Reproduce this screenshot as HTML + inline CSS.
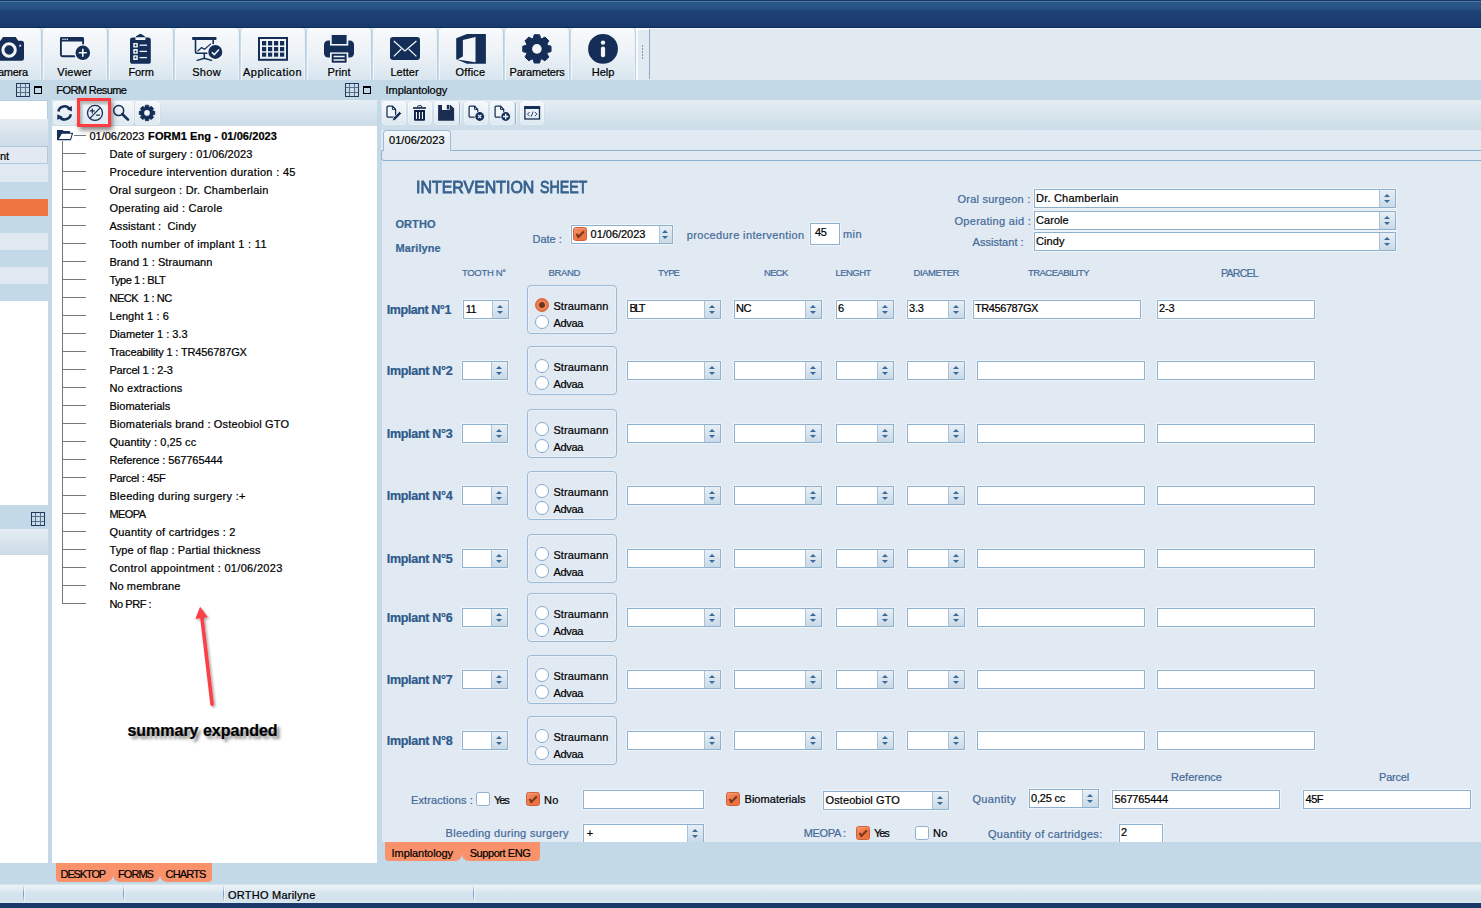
<!DOCTYPE html><html><head><meta charset="utf-8"><title>Implantology</title><style>
html,body{margin:0;padding:0;overflow:hidden}
body{width:1481px;height:908px;overflow:hidden;position:relative;background:#c3d9e7;font-family:"Liberation Sans",sans-serif;font-size:11px;color:#000}
div,svg{position:absolute;box-sizing:border-box}
.t{white-space:pre;-webkit-text-stroke:0.22px}
.titlebar{left:0;top:0;width:1481px;height:28px;background:linear-gradient(#1a3560 0,#1a3560 .6px,#4779a7 1.1px,#4779a7 1.9px,#2b5889 2.5px,#265081 9.3px,#1e4277 10.6px,#193a6b 26.4px,#0f2d5e 27.2px,#0f2d5e 28px)}
.toolbar{left:0;top:28px;width:1481px;height:52px;background:#e1e9f1}
.tbtn{top:0;width:66px;height:52px;background:linear-gradient(#f8fafc,#eef3f7 45%,#d8e5ee);border-left:1px solid #c6dae8;border-right:1px solid #b4cee2;border-radius:4px 4px 0 0;box-shadow:inset 1px 0 0 #f4f8fb,inset -1px 0 0 #edf3f8,inset 0 1px 0 #fbfcfd}
.band{background:linear-gradient(#e6edf3,#cbdce8)}
.sbtn{top:100.6px;height:24.6px;background:linear-gradient(#f6f9fb,#ebf1f6 45%,#dce8f0);border-radius:4px;box-shadow:0 0 0 .6px rgba(200,219,233,.9),inset 0 0 0 1px rgba(255,255,255,.3)}
.inp{background:#fff;border:1px solid #8fb1d0;box-shadow:0 0 0 1px rgba(255,255,255,.45)}
.spin{top:0;right:0;bottom:0;border-left:1px solid #a9c3da;background:linear-gradient(#e9eff5,#c9dae7)}
.spin:before,.spin:after{content:"";position:absolute;left:50%;margin-left:-3.7px;border-left:3.7px solid transparent;border-right:3.7px solid transparent}
.spin:before{top:50%;margin-top:-5px;border-bottom:3.6px solid #386a9c}
.spin:after{top:50%;margin-top:1.4px;border-top:3.6px solid #386a9c}
.grp{border:1px solid #9bbad5;border-radius:4px;box-shadow:inset 0 0 0 1px rgba(255,255,255,.35)}
.radio{width:14px;height:14px;border-radius:50%;background:#fff;border:1px solid #86aacb}
.radio.on{background:radial-gradient(circle,#6e3420 0,#6e3420 2.5px,#f08a5e 3.4px,#ea764b 5.2px,#dd6538 7px);border-color:#d9673d}
.cb{width:14px;height:14px;border-radius:2.5px;background:#fff;border:1px solid #8fb1d0}
.cb.on{background:linear-gradient(135deg,#f6906a,#ee7444 60%,#ed713f);border-color:#cf5f35;box-shadow:inset 0 1px 0 rgba(255,255,255,.18)}
.otab{background:#f9926b;border-radius:0 0 5px 5px}
</style></head><body><div class="titlebar"></div><div class="toolbar"><div class="tbtn" style="left:-24px"></div><div class="tbtn" style="left:42px"></div><div class="tbtn" style="left:108px"></div><div class="tbtn" style="left:174px"></div><div class="tbtn" style="left:240px"></div><div class="tbtn" style="left:306px"></div><div class="tbtn" style="left:372px"></div><div class="tbtn" style="left:438px"></div><div class="tbtn" style="left:504px"></div><div class="tbtn" style="left:570px"></div><div style="left:636px;top:0;width:13px;height:52px;background:#f8fafc"></div><div style="left:650px;top:0;width:831px;height:1px;background:#f0f4f8"></div><div style="left:638px;top:2px;width:11px;height:50px;background:#e1e9f1"></div><div style="left:649px;top:1px;width:1px;height:50px;background:#8dabc9"></div><div style="left:641.6px;top:16.6px;width:1.6px;height:14px;background:repeating-linear-gradient(#7f99b8 0 1.6px,transparent 1.6px 3.1px)"></div></div><div class="t " style="left:-9.70px;top:66.56px;font-size:11px;line-height:11px;color:#000;letter-spacing:-0.287px;">Camera</div><div class="t " style="left:57.30px;top:66.56px;font-size:11px;line-height:11px;color:#000;letter-spacing:0.213px;">Viewer</div><div class="t " style="left:128.50px;top:66.56px;font-size:11px;line-height:11px;color:#000;letter-spacing:-0.115px;">Form</div><div class="t " style="left:192.20px;top:66.56px;font-size:11px;line-height:11px;color:#000;letter-spacing:0.321px;">Show</div><div class="t " style="left:243.00px;top:66.56px;font-size:11px;line-height:11px;color:#000;letter-spacing:0.472px;">Application</div><div class="t " style="left:327.50px;top:66.56px;font-size:11px;line-height:11px;color:#000;letter-spacing:0.097px;">Print</div><div class="t " style="left:390.40px;top:66.56px;font-size:11px;line-height:11px;color:#000;letter-spacing:0.029px;">Letter</div><div class="t " style="left:455.60px;top:66.56px;font-size:11px;line-height:11px;color:#000;letter-spacing:0.212px;">Office</div><div class="t " style="left:509.50px;top:66.56px;font-size:11px;line-height:11px;color:#000;letter-spacing:-0.185px;">Parameters</div><div class="t " style="left:591.70px;top:66.56px;font-size:11px;line-height:11px;color:#000;letter-spacing:0.044px;">Help</div><svg style="left:0;top:0;z-index:5" width="660" height="130" viewBox="0 0 660 130"><path d="M-6 43.3 a2.5 2.5 0 0 1 2.5 -2.5 H0.5 L3 37 H15.7 L18.2 40.8 H21.5 a2.5 2.5 0 0 1 2.5 2.5 V58.3 a2.5 2.5 0 0 1 -2.5 2.5 H-3.5 a2.5 2.5 0 0 1 -2.5 -2.5 Z" fill="#142e57"/><circle cx="9.1" cy="50" r="6.2" fill="none" stroke="#f3f6f9" stroke-width="3"/><rect x="19.3" y="44.8" width="1.8" height="1.8" fill="#f3f6f9"/><path d="M83.1 46.5 V39.4 a1.5 1.5 0 0 0 -1.5 -1.5 H62.4 a1.5 1.5 0 0 0 -1.5 1.5 V54.8 a1.5 1.5 0 0 0 1.5 1.5 H75.5" fill="none" stroke="#142e57" stroke-width="1.9"/><rect x="60" y="37" width="24" height="4.6" rx="1.5" fill="#142e57"/><rect x="62.2" y="38.6" width="1.4" height="1.3" fill="#f3f6f9"/><rect x="64.4" y="38.6" width="1.4" height="1.3" fill="#f3f6f9"/><rect x="66.6" y="38.6" width="1.4" height="1.3" fill="#f3f6f9"/><circle cx="82.8" cy="52.8" r="8.6" fill="#f3f6f9"/><circle cx="82.8" cy="52.8" r="7.3" fill="#142e57"/><path d="M82.8 48.8 V56.8 M78.8 52.8 H86.8" stroke="#f3f6f9" stroke-width="1.6"/><rect x="130" y="37.4" width="20.8" height="26.4" rx="2.6" fill="#142e57"/><path d="M135.5 40 V38.2 a1.2 1.2 0 0 1 1.2 -1.2 H144.2 a1.2 1.2 0 0 1 1.2 1.2 V40 Z" fill="#f3f6f9"/><path d="M136 37.2 H144.9 V36.2 L141.6 34.2 a1.6 1.6 0 0 0 -2.2 0 L136 36.2 Z" fill="#142e57"/><rect x="133.2" y="42.900000000000006" width="4.6" height="4.6" rx=".6" fill="#f3f6f9"/><circle cx="135.5" cy="45.2" r="1" fill="#142e57"/><path d="M139.6 45.2 H147" stroke="#f3f6f9" stroke-width="1.3"/><rect x="133.2" y="49.1" width="4.6" height="4.6" rx=".6" fill="#f3f6f9"/><circle cx="135.5" cy="51.4" r="1" fill="#142e57"/><path d="M139.6 51.4 H147" stroke="#f3f6f9" stroke-width="1.3"/><rect x="133.2" y="55.300000000000004" width="4.6" height="4.6" rx=".6" fill="#f3f6f9"/><circle cx="135.5" cy="57.6" r="1" fill="#142e57"/><path d="M139.6 57.6 H147" stroke="#f3f6f9" stroke-width="1.3"/><rect x="192" y="37" width="24.6" height="3" rx="1.2" fill="#142e57"/><path d="M195.5 40 V52 a1.2 1.2 0 0 0 1.2 1.2 H212 a1.2 1.2 0 0 0 1.2 -1.2 V40" fill="none" stroke="#142e57" stroke-width="1.6"/><path d="M204.3 53.5 V58.4 M204.3 58.2 L197.2 60.4 M204.3 58.2 L211.5 60.4" fill="none" stroke="#142e57" stroke-width="1.5" stroke-linecap="round"/><path d="M197.5 51.3 L201.6 47.6 L204.6 49.2 L211 43.6" fill="none" stroke="#142e57" stroke-width="1.2"/><circle cx="215.3" cy="51.9" r="8.1" fill="#f3f6f9"/><circle cx="215.3" cy="51.9" r="7" fill="#142e57"/><path d="M211.9 52.2 L214.3 54.6 L219 49.6" fill="none" stroke="#f3f6f9" stroke-width="1.5"/><rect x="259" y="38" width="28" height="21.8" fill="none" stroke="#142e57" stroke-width="2"/><rect x="262" y="41" width="4.2" height="4.5" fill="#142e57"/><rect x="262" y="47" width="4.2" height="4.2" fill="#142e57"/><rect x="262" y="52.6" width="4.2" height="4.1" fill="#142e57"/><rect x="268" y="41" width="4.2" height="4.5" fill="#142e57"/><rect x="268" y="47" width="4.2" height="4.2" fill="#142e57"/><rect x="268" y="52.6" width="4.2" height="4.1" fill="#142e57"/><rect x="274" y="41" width="4.2" height="4.5" fill="#142e57"/><rect x="274" y="47" width="4.2" height="4.2" fill="#142e57"/><rect x="274" y="52.6" width="4.2" height="4.1" fill="#142e57"/><rect x="280" y="41" width="4.2" height="4.5" fill="#142e57"/><rect x="280" y="47" width="4.2" height="4.2" fill="#142e57"/><rect x="280" y="52.6" width="4.2" height="4.1" fill="#142e57"/><rect x="324" y="40.4" width="30" height="17.2" rx="4.2" fill="#142e57"/><rect x="330" y="33.6" width="18.3" height="12" fill="#f3f6f9"/><rect x="331.7" y="35" width="14.9" height="9" fill="#142e57"/><rect x="330" y="52.4" width="18.3" height="11.5" fill="#f3f6f9"/><rect x="331.7" y="53.8" width="14.9" height="8.9" fill="#142e57"/><path d="M333.6 56.5 H344.7 M333.6 60.1 H344.7" stroke="#f3f6f9" stroke-width="1.5"/><rect x="390" y="37" width="30" height="22.9" rx="3.2" fill="#142e57"/><path d="M393.8 41 L404.9 51 L416.4 41 M393.8 56.4 L401.3 49 M416.4 56.4 L408.7 49" fill="none" stroke="#f3f6f9" stroke-width="1.25"/><path d="M456.2 38.2 L467 34.1 H485.9 V63.8 H467 L456.2 59.3 Z" fill="#142e57"/><path d="M462.9 40 L475.5 37 V62.3 L457.4 59.5 L462.9 56.6 Z" fill="#f3f6f9"/><path d="M533.27 38.30 L534.18 34.76 L539.62 34.76 L540.53 38.30 L541.83 38.84 L544.98 36.98 L548.82 40.82 L546.96 43.97 L547.50 45.27 L551.04 46.18 L551.04 51.62 L547.50 52.53 L546.96 53.83 L548.82 56.98 L544.98 60.82 L541.83 58.96 L540.53 59.50 L539.62 63.04 L534.18 63.04 L533.27 59.50 L531.97 58.96 L528.82 60.82 L524.98 56.98 L526.84 53.83 L526.30 52.53 L522.76 51.62 L522.76 46.18 L526.30 45.27 L526.84 43.97 L524.98 40.82 L528.82 36.98 L531.97 38.84 Z" fill="#142e57" stroke="#142e57" stroke-width="1.0" stroke-linejoin="round"/><circle cx="536.9" cy="48.9" r="4.8" fill="#f3f6f9"/><circle cx="603" cy="48.9" r="14.9" fill="#142e57"/><circle cx="603" cy="42.6" r="2.2" fill="#f3f6f9"/><path d="M603 48.6 V55.2" stroke="#f3f6f9" stroke-width="4.2" stroke-linecap="round"/><path d="M58.39999999999999 111.5 A6.2 6.2 0 0 1 69.8 109.30000000000001" fill="none" stroke="#142e57" stroke-width="2.5"/><path d="M70.8 114.30000000000001 A6.2 6.2 0 0 1 59.39999999999999 116.5" fill="none" stroke="#142e57" stroke-width="2.5"/><path d="M71.9 105.9 V111.6 L66.6 109.1 Z" fill="#142e57"/><path d="M57.3 119.9 V114.2 L62.6 116.7 Z" fill="#142e57"/><circle cx="95" cy="112.9" r="7.5" fill="none" stroke="#142e57" stroke-width="1.3"/><path d="M89.9 118.4 L100.3 107.6" stroke="#142e57" stroke-width="1.3"/><path d="M92.3 108.4 V113.4 M89.8 110.9 H94.8 M96.2 115.2 H99.9" stroke="#142e57" stroke-width="1.2"/><circle cx="118.7" cy="110.6" r="5" fill="none" stroke="#142e57" stroke-width="1.5"/><path d="M122.4 114.2 L128 119.6" stroke="#142e57" stroke-width="2.6" stroke-linecap="round"/><path d="M144.97 107.15 L145.43 105.16 L148.57 105.16 L149.03 107.15 L149.63 107.40 L151.36 106.32 L153.58 108.54 L152.50 110.27 L152.75 110.87 L154.74 111.33 L154.74 114.47 L152.75 114.93 L152.50 115.53 L153.58 117.26 L151.36 119.48 L149.63 118.40 L149.03 118.65 L148.57 120.64 L145.43 120.64 L144.97 118.65 L144.37 118.40 L142.64 119.48 L140.42 117.26 L141.50 115.53 L141.25 114.93 L139.26 114.47 L139.26 111.33 L141.25 110.87 L141.50 110.27 L140.42 108.54 L142.64 106.32 L144.37 107.40 Z" fill="#142e57" stroke="#142e57" stroke-width="0.8" stroke-linejoin="round"/><circle cx="147" cy="112.9" r="2.8" fill="#f3f6f9"/><path d="M387.0 107.0 a1 1 0 0 1 1 -1 H392.40000000000003 L395.6 109.4 V116.2 a1 1 0 0 1 -1 1 H388.0 a1 1 0 0 1 -1 -1 Z" fill="#f3f6f9" stroke="#142e57" stroke-width="1.25" stroke-linejoin="round"/><path d="M392.40000000000003 106.1 V109.4 H395.6" fill="none" stroke="#142e57" stroke-width="1"/><path d="M392.4 121 L393.1 117.9 L399.5 111.4 L401.6 113.5 L395.3 120.1 Z" fill="#142e57" stroke="#dfe8f0" stroke-width=".8"/><path d="M413 108 H426" stroke="#0f2149" stroke-width="1.6"/><path d="M417.7 107.4 V106.3 a.6 .6 0 0 1 .6 -.6 H421 a.6 .6 0 0 1 .6 .6 V107.4" fill="none" stroke="#0f2149" stroke-width="1"/><path d="M414 110 H425 V119.8 a1 1 0 0 1 -1 1 H415 a1 1 0 0 1 -1 -1 Z" fill="#0f2149"/><path d="M416.45 112 V118.9 M419.45 112 V118.9 M422.45 112 V118.9" stroke="#f3f6f9" stroke-width="1.1"/><path d="M438.1 105 H450.6 L454.1 108.5 V120.8 H438.1 Z" fill="#1b2d52"/><rect x="442" y="104.9" width="7.6" height="5.1" fill="#f3f6f9"/><rect x="446.8" y="104.9" width="2.2" height="4.5" fill="#1b2d52"/><path d="M469.09999999999997 107.0 a1 1 0 0 1 1 -1 H474.5 L477.7 109.4 V116.2 a1 1 0 0 1 -1 1 H470.09999999999997 a1 1 0 0 1 -1 -1 Z" fill="#f3f6f9" stroke="#142e57" stroke-width="1.25" stroke-linejoin="round"/><path d="M474.5 106.1 V109.4 H477.7" fill="none" stroke="#142e57" stroke-width="1"/><circle cx="479.7" cy="116.5" r="5.2" fill="#e0e9f1"/><circle cx="479.7" cy="116.5" r="4.4" fill="#142e57"/><path d="M478.1 114.9 L481.3 118.1 M481.3 114.9 L478.1 118.1" stroke="#f3f6f9" stroke-width="1.3"/><path d="M495.09999999999997 107.0 a1 1 0 0 1 1 -1 H500.5 L503.7 109.4 V116.2 a1 1 0 0 1 -1 1 H496.09999999999997 a1 1 0 0 1 -1 -1 Z" fill="#f3f6f9" stroke="#142e57" stroke-width="1.25" stroke-linejoin="round"/><path d="M500.5 106.1 V109.4 H503.7" fill="none" stroke="#142e57" stroke-width="1"/><circle cx="505.7" cy="116.5" r="5.2" fill="#e0e9f1"/><circle cx="505.7" cy="116.5" r="4.4" fill="#142e57"/><path d="M505.7 113.8 V119.2 M503 116.5 H508.4" stroke="#f3f6f9" stroke-width="1.4"/><rect x="524.9" y="106.8" width="14.6" height="12.2" fill="none" stroke="#142e57" stroke-width="1.3"/><rect x="524.3" y="106.2" width="15.8" height="2.8" fill="#142e57"/><path d="M529.6 112 L527.5 114.1 L529.6 116.2 M534.8 112 L536.9 114.1 L534.8 116.2 M533.2 111.6 L531.2 116.6" fill="none" stroke="#142e57" stroke-width=".9"/></svg><div class="t " style="left:56.30px;top:85.26px;font-size:11px;line-height:11px;color:#000;letter-spacing:-0.581px;">FORM Resume</div><div class="t " style="left:385.60px;top:85.26px;font-size:11px;line-height:11px;color:#000;letter-spacing:-0.072px;">Implantology</div><svg style="left:16px;top:83px" width="14" height="14" viewBox="0 0 14 14"><rect x="0.5" y="0.5" width="13" height="13" fill="#c9dcea" stroke="#22385a"/><path d="M4.5 1V13M9.5 1V13M1 4.5H13M1 9.5H13" stroke="#5b6f88" stroke-width="1"/></svg><div style="left:34px;top:86px;width:8px;height:8px;border:1px solid #000;border-top-width:2px"></div><svg style="left:345px;top:83px" width="14" height="14" viewBox="0 0 14 14"><rect x="0.5" y="0.5" width="13" height="13" fill="#c9dcea" stroke="#22385a"/><path d="M4.5 1V13M9.5 1V13M1 4.5H13M1 9.5H13" stroke="#5b6f88" stroke-width="1"/></svg><div style="left:363px;top:86px;width:8px;height:8px;border:1px solid #000;border-top-width:2px"></div><div class="band" style="left:0;top:100px;width:48px;height:26px"></div><div style="left:-1px;top:100px;width:49px;height:20px;background:#fff;border:1px solid #b5cde0"></div><div style="left:-1px;top:146px;width:49px;height:18px;background:#e2e9f2;border:1px solid #b2c9dd"></div><div class="t " style="left:0.00px;top:150.86px;font-size:11px;line-height:11px;color:#000;">nt</div><div class="band" style="left:0;top:119px;width:48px;height:27px"></div><div style="left:0;top:164px;width:48px;height:18px;background:#e0e8f1"></div><div style="left:0;top:199px;width:48px;height:17px;background:#ee7641"></div><div style="left:0;top:233px;width:48px;height:17px;background:#e0e8f1"></div><div style="left:0;top:267px;width:48px;height:17px;background:#e0e8f1"></div><div style="left:0;top:301px;width:48px;height:204px;background:#fff"></div><svg style="left:31px;top:512px" width="14" height="14" viewBox="0 0 14 14"><rect x="0.5" y="0.5" width="13" height="13" fill="#c9dcea" stroke="#22385a"/><path d="M4.5 1V13M9.5 1V13M1 4.5H13M1 9.5H13" stroke="#5b6f88" stroke-width="1"/></svg><div class="band" style="left:0;top:529px;width:48px;height:26px"></div><div style="left:0;top:555px;width:48px;height:308px;background:#fff"></div><div class="band" style="left:52px;top:100px;width:325px;height:26px"></div><div class="sbtn" style="left:52.6px;width:24.6px"></div><div class="sbtn" style="left:78px;width:32px"></div><div class="sbtn" style="left:111px;width:22.599999999999994px"></div><div class="sbtn" style="left:134.6px;width:25.0px"></div><div style="left:52px;top:126px;width:325px;height:737px;background:#fff"></div><div style="left:74px;top:135px;width:12px;height:1px;background:#787878"></div><div style="left:62px;top:141px;width:1px;height:463px;background:#787878"></div><div style="left:62px;top:153px;width:24px;height:1px;background:#787878"></div><div class="t " style="left:109.40px;top:148.86px;font-size:11px;line-height:11px;color:#000;letter-spacing:0.135px;">Date of surgery : 01/06/2023</div><div style="left:62px;top:171px;width:24px;height:1px;background:#787878"></div><div class="t " style="left:109.40px;top:166.86px;font-size:11px;line-height:11px;color:#000;letter-spacing:0.320px;">Procedure intervention duration : 45</div><div style="left:62px;top:189px;width:24px;height:1px;background:#787878"></div><div class="t " style="left:109.40px;top:184.86px;font-size:11px;line-height:11px;color:#000;letter-spacing:0.233px;">Oral surgeon : Dr. Chamberlain</div><div style="left:62px;top:207px;width:24px;height:1px;background:#787878"></div><div class="t " style="left:109.40px;top:202.86px;font-size:11px;line-height:11px;color:#000;letter-spacing:0.250px;">Operating aid : Carole</div><div style="left:62px;top:225px;width:24px;height:1px;background:#787878"></div><div class="t " style="left:109.40px;top:220.86px;font-size:11px;line-height:11px;color:#000;letter-spacing:0.101px;">Assistant :  Cindy</div><div style="left:62px;top:243px;width:24px;height:1px;background:#787878"></div><div class="t " style="left:109.40px;top:238.86px;font-size:11px;line-height:11px;color:#000;letter-spacing:0.325px;">Tooth number of implant 1 : 11</div><div style="left:62px;top:261px;width:24px;height:1px;background:#787878"></div><div class="t " style="left:109.40px;top:256.86px;font-size:11px;line-height:11px;color:#000;letter-spacing:0.084px;">Brand 1 : Straumann</div><div style="left:62px;top:279px;width:24px;height:1px;background:#787878"></div><div class="t " style="left:109.40px;top:274.86px;font-size:11px;line-height:11px;color:#000;letter-spacing:-0.479px;">Type 1 : BLT</div><div style="left:62px;top:297px;width:24px;height:1px;background:#787878"></div><div class="t " style="left:109.40px;top:292.86px;font-size:11px;line-height:11px;color:#000;letter-spacing:-0.454px;">NECK  1 : NC</div><div style="left:62px;top:315px;width:24px;height:1px;background:#787878"></div><div class="t " style="left:109.40px;top:310.86px;font-size:11px;line-height:11px;color:#000;letter-spacing:0.125px;">Lenght 1 : 6</div><div style="left:62px;top:333px;width:24px;height:1px;background:#787878"></div><div class="t " style="left:109.40px;top:328.86px;font-size:11px;line-height:11px;color:#000;letter-spacing:-0.003px;">Diameter 1 : 3.3</div><div style="left:62px;top:351px;width:24px;height:1px;background:#787878"></div><div class="t " style="left:109.40px;top:346.86px;font-size:11px;line-height:11px;color:#000;letter-spacing:-0.142px;">Traceability 1 : TR456787GX</div><div style="left:62px;top:369px;width:24px;height:1px;background:#787878"></div><div class="t " style="left:109.40px;top:364.86px;font-size:11px;line-height:11px;color:#000;letter-spacing:-0.151px;">Parcel 1 : 2-3</div><div style="left:62px;top:387px;width:24px;height:1px;background:#787878"></div><div class="t " style="left:109.40px;top:382.86px;font-size:11px;line-height:11px;color:#000;letter-spacing:0.193px;">No extractions</div><div style="left:62px;top:405px;width:24px;height:1px;background:#787878"></div><div class="t " style="left:109.40px;top:400.86px;font-size:11px;line-height:11px;color:#000;letter-spacing:0.040px;">Biomaterials</div><div style="left:62px;top:423px;width:24px;height:1px;background:#787878"></div><div class="t " style="left:109.40px;top:418.86px;font-size:11px;line-height:11px;color:#000;letter-spacing:0.170px;">Biomaterials brand : Osteobiol GTO</div><div style="left:62px;top:441px;width:24px;height:1px;background:#787878"></div><div class="t " style="left:109.40px;top:436.86px;font-size:11px;line-height:11px;color:#000;letter-spacing:0.067px;">Quantity : 0,25 cc</div><div style="left:62px;top:459px;width:24px;height:1px;background:#787878"></div><div class="t " style="left:109.40px;top:454.86px;font-size:11px;line-height:11px;color:#000;letter-spacing:-0.089px;">Reference : 567765444</div><div style="left:62px;top:477px;width:24px;height:1px;background:#787878"></div><div class="t " style="left:109.40px;top:472.86px;font-size:11px;line-height:11px;color:#000;letter-spacing:-0.267px;">Parcel : 45F</div><div style="left:62px;top:495px;width:24px;height:1px;background:#787878"></div><div class="t " style="left:109.40px;top:490.86px;font-size:11px;line-height:11px;color:#000;letter-spacing:0.292px;">Bleeding during surgery :+</div><div style="left:62px;top:513px;width:24px;height:1px;background:#787878"></div><div class="t " style="left:109.40px;top:508.86px;font-size:11px;line-height:11px;color:#000;letter-spacing:-0.563px;">MEOPA</div><div style="left:62px;top:531px;width:24px;height:1px;background:#787878"></div><div class="t " style="left:109.40px;top:526.86px;font-size:11px;line-height:11px;color:#000;letter-spacing:0.249px;">Quantity of cartridges : 2</div><div style="left:62px;top:549px;width:24px;height:1px;background:#787878"></div><div class="t " style="left:109.40px;top:544.86px;font-size:11px;line-height:11px;color:#000;letter-spacing:0.159px;">Type of flap : Partial thickness</div><div style="left:62px;top:567px;width:24px;height:1px;background:#787878"></div><div class="t " style="left:109.40px;top:562.86px;font-size:11px;line-height:11px;color:#000;letter-spacing:0.310px;">Control appointment : 01/06/2023</div><div style="left:62px;top:585px;width:24px;height:1px;background:#787878"></div><div class="t " style="left:109.40px;top:580.86px;font-size:11px;line-height:11px;color:#000;letter-spacing:0.119px;">No membrane</div><div style="left:62px;top:603px;width:24px;height:1px;background:#787878"></div><div class="t " style="left:109.40px;top:598.86px;font-size:11px;line-height:11px;color:#000;letter-spacing:-0.429px;">No PRF :</div><div class="t " style="left:89.40px;top:130.86px;font-size:11px;line-height:11px;color:#000;">01/06/2023 </div><div class="t " style="left:148.10px;top:130.86px;font-size:11px;line-height:11px;color:#000;font-weight:bold;letter-spacing:0.079px;">FORM1 Eng - 01/06/2023</div><svg style="left:56px;top:129px" width="18" height="13" viewBox="56 129 18 13"><path d="M57 130 H62.9 L63.5 131.1 H69.9 V133.2 H61.4 L57.6 140.2 H57 Z" fill="#142e57"/><path d="M61.5 133.3 H72.5 L70.6 139.6 H57.9 Z" fill="#fff" stroke="#142e57" stroke-width="1.1" stroke-linejoin="round"/></svg><div style="left:77px;top:98px;width:34px;height:29px;border:3px solid #fc3c3e;box-shadow:1.5px 3px 5px rgba(0,0,0,.5),inset 2px 3px 3px rgba(0,0,0,.28)"></div><div class="t " style="left:127.40px;top:722.51px;font-size:16px;line-height:16px;color:#000;font-weight:bold;letter-spacing:-0.005px;text-shadow:3px 3px 3px rgba(0,0,0,.5);">summary expanded</div><svg style="left:180px;top:595px" width="50" height="125" viewBox="180 595 50 125"><g filter="url(#sh)"><path d="M212.1 704.3 L201.9 617.5" stroke="#fb3f46" stroke-width="3.6" fill="none" stroke-linecap="round"/><path d="M200.1 606.8 L207.8 617.3 L195.3 619 Z" fill="#fb3f46"/></g><defs><filter id="sh" x="-50%" y="-10%" width="200%" height="120%"><feDropShadow dx="1.5" dy="1.5" stdDeviation="1.3" flood-opacity=".35"/></filter></defs></svg><div class="otab" style="left:56px;top:863px;width:57px;height:19px;border-radius:0 0 7px 4px"></div><div class="otab" style="left:113px;top:863px;width:47px;height:19px;border-radius:0 0 7px 7px"></div><div class="otab" style="left:160px;top:863px;width:52px;height:19px;border-radius:0 0 4px 7px"></div><div class="t " style="left:60.60px;top:868.86px;font-size:11px;line-height:11px;color:#000;letter-spacing:-1.138px;">DESKTOP</div><div class="t " style="left:118.00px;top:868.86px;font-size:11px;line-height:11px;color:#000;letter-spacing:-0.944px;">FORMS</div><div class="t " style="left:165.60px;top:868.86px;font-size:11px;line-height:11px;color:#000;letter-spacing:-0.838px;">CHARTS</div><div class="band" style="left:381px;top:100px;width:1100px;height:30px"></div><div class="sbtn" style="left:381.6px;width:24.799999999999955px"></div><div class="sbtn" style="left:407.8px;width:24.399999999999977px"></div><div class="sbtn" style="left:433.8px;width:24.80000000000001px"></div><div class="sbtn" style="left:463.6px;width:24.599999999999966px"></div><div class="sbtn" style="left:489.7px;width:24.599999999999966px"></div><div class="sbtn" style="left:519.5px;width:24.799999999999955px"></div><div style="left:459px;top:103px;width:1px;height:21px;background:#96b7d4"></div><div style="left:460px;top:103px;width:1px;height:21px;background:rgba(255,255,255,.5)"></div><div style="left:515px;top:103px;width:1px;height:21px;background:#96b7d4"></div><div style="left:516px;top:103px;width:1px;height:21px;background:rgba(255,255,255,.5)"></div><div style="left:381px;top:130px;width:1100px;height:712px;background:#e1e9f2"></div><div style="left:381px;top:150px;width:1101px;height:11px;border:1px solid #8fb1d0;border-right:0;border-radius:2px 0 0 3px;background:#e1e9f2"></div><div style="left:383px;top:130px;width:68px;height:21px;border:1px solid #9dbbd6;border-bottom:0;border-radius:4px 4px 0 0;background:linear-gradient(#f4f7fa,#e1e9f2)"></div><div style="left:381px;top:161px;width:1px;height:681px;background:#c3d9e7"></div><div class="t " style="left:389.00px;top:135.26px;font-size:11px;line-height:11px;color:#000;letter-spacing:0.055px;">01/06/2023</div><div class="t " style="left:416.20px;top:178.88px;font-size:17px;line-height:17px;color:#36628f;-webkit-text-stroke:0.85px #36628f;transform:scaleX(0.9374);transform-origin:0 0;">INTERVENTION</div><div class="t " style="left:539.90px;top:178.88px;font-size:17px;line-height:17px;color:#36628f;-webkit-text-stroke:0.85px #36628f;transform:scaleX(0.8336);transform-origin:0 0;">SHEET</div><div class="t " style="left:395.50px;top:218.86px;font-size:11px;line-height:11px;color:#3a6795;font-weight:bold;letter-spacing:0.056px;">ORTHO</div><div class="t " style="left:395.50px;top:242.86px;font-size:11px;line-height:11px;color:#3a6795;font-weight:bold;letter-spacing:0.072px;">Marilyne</div><div class="t " style="left:532.50px;top:233.56px;font-size:11px;line-height:11px;color:#456b99;letter-spacing:-0.024px;">Date :</div><div class="t " style="left:686.70px;top:230.36px;font-size:11px;line-height:11px;color:#456b99;letter-spacing:0.380px;">procedure intervention</div><div class="t " style="left:843.00px;top:228.86px;font-size:11px;line-height:11px;color:#456b99;letter-spacing:0.425px;">min</div><div class="t " style="left:957.50px;top:193.86px;font-size:11px;line-height:11px;color:#456b99;letter-spacing:0.236px;">Oral surgeon :</div><div class="t " style="left:954.50px;top:215.86px;font-size:11px;line-height:11px;color:#456b99;letter-spacing:0.290px;">Operating aid :</div><div class="t " style="left:972.50px;top:236.56px;font-size:11px;line-height:11px;color:#456b99;letter-spacing:0.042px;">Assistant :</div><div class="inp" style="left:571px;top:225px;width:102px;height:19px"><div class="spin" style="width:13px"></div></div><div class="cb on" style="left:573px;top:227px"></div><svg style="left:573px;top:227px" width="14" height="14" viewBox="0 0 14 14"><path d="M3.7 6.9 L5.3 10.1 L10.8 4.4" fill="none" stroke="#7a361e" stroke-width="2.1" stroke-linejoin="round"/></svg><div class="t " style="left:590.60px;top:229.16px;font-size:11px;line-height:11px;color:#000;letter-spacing:-0.025px;">01/06/2023</div><div class="inp" style="left:810px;top:223px;width:30px;height:22px"></div><div class="t " style="left:815.00px;top:226.86px;font-size:11px;line-height:11px;color:#000;letter-spacing:-0.267px;">45</div><div class="inp" style="left:1034px;top:189px;width:362px;height:19px"><div class="spin" style="width:16px"></div></div><div class="t " style="left:1036.00px;top:192.66px;font-size:11px;line-height:11px;color:#000;letter-spacing:0.209px;">Dr. Chamberlain</div><div class="inp" style="left:1034px;top:211px;width:362px;height:19px"><div class="spin" style="width:16px"></div></div><div class="t " style="left:1036.00px;top:214.86px;font-size:11px;line-height:11px;color:#000;letter-spacing:0.066px;">Carole</div><div class="inp" style="left:1034px;top:232px;width:362px;height:19px"><div class="spin" style="width:16px"></div></div><div class="t " style="left:1036.00px;top:236.16px;font-size:11px;line-height:11px;color:#000;letter-spacing:0.116px;">Cindy</div><div class="t " style="left:462.00px;top:268.41px;font-size:9.5px;line-height:9.5px;color:#456b99;letter-spacing:-0.334px;">TOOTH N°</div><div class="t " style="left:548.50px;top:268.41px;font-size:9.5px;line-height:9.5px;color:#456b99;letter-spacing:-0.351px;">BRAND</div><div class="t " style="left:658.00px;top:268.41px;font-size:9.5px;line-height:9.5px;color:#456b99;letter-spacing:-0.953px;">TYPE</div><div class="t " style="left:764.00px;top:268.41px;font-size:9.5px;line-height:9.5px;color:#456b99;letter-spacing:-0.724px;">NECK</div><div class="t " style="left:835.50px;top:268.41px;font-size:9.5px;line-height:9.5px;color:#456b99;letter-spacing:-0.555px;">LENGHT</div><div class="t " style="left:913.50px;top:268.41px;font-size:9.5px;line-height:9.5px;color:#456b99;letter-spacing:-0.448px;">DIAMETER</div><div class="t " style="left:1028.00px;top:268.41px;font-size:9.5px;line-height:9.5px;color:#456b99;letter-spacing:-0.548px;">TRACEABILITY</div><div class="t " style="left:1221.00px;top:267.58px;font-size:10.5px;line-height:10.5px;color:#456b99;letter-spacing:-0.706px;">PARCEL</div><div class="t " style="left:386.70px;top:304.12px;font-size:12.5px;line-height:12.5px;color:#2d5a8b;font-weight:bold;letter-spacing:-0.418px;">Implant N°1</div><div class="inp" style="left:463px;top:300px;width:46px;height:19px"><div class="spin" style="width:16px"></div></div><div class="t " style="left:465.70px;top:303.66px;font-size:11px;line-height:11px;color:#000;letter-spacing:-0.459px;">11</div><div class="grp" style="left:527px;top:285px;width:90px;height:49px"></div><div class="radio on" style="left:535px;top:298px"></div><div class="radio" style="left:535px;top:315px"></div><div class="t " style="left:553.40px;top:300.66px;font-size:11px;line-height:11px;color:#000;letter-spacing:0.133px;">Straumann</div><div class="t " style="left:553.40px;top:317.66px;font-size:11px;line-height:11px;color:#000;letter-spacing:-0.278px;">Advaa</div><div class="inp" style="left:627px;top:300px;width:94px;height:19px"><div class="spin" style="width:16px"></div></div><div class="t " style="left:629.50px;top:303.36px;font-size:11px;line-height:11px;color:#000;letter-spacing:-1.719px;">BLT</div><div class="inp" style="left:734px;top:300px;width:88px;height:19px"><div class="spin" style="width:16px"></div></div><div class="t " style="left:736.00px;top:303.36px;font-size:11px;line-height:11px;color:#000;letter-spacing:-0.444px;">NC</div><div class="inp" style="left:836px;top:300px;width:58px;height:19px"><div class="spin" style="width:16px"></div></div><div class="t " style="left:838.00px;top:303.36px;font-size:11px;line-height:11px;color:#000;">6</div><div class="inp" style="left:907px;top:300px;width:58px;height:19px"><div class="spin" style="width:16px"></div></div><div class="t " style="left:909.00px;top:303.36px;font-size:11px;line-height:11px;color:#000;letter-spacing:-0.197px;">3.3</div><div class="inp" style="left:973px;top:300px;width:168px;height:19px"></div><div class="t " style="left:975.00px;top:303.36px;font-size:11px;line-height:11px;color:#000;letter-spacing:-0.426px;">TR456787GX</div><div class="inp" style="left:1157px;top:300px;width:158px;height:19px"></div><div class="t " style="left:1159.00px;top:303.36px;font-size:11px;line-height:11px;color:#000;letter-spacing:-0.132px;">2-3</div><div class="t " style="left:386.70px;top:365.12px;font-size:12.5px;line-height:12.5px;color:#2d5a8b;font-weight:bold;letter-spacing:-0.281px;">Implant N°2</div><div class="inp" style="left:462px;top:361px;width:46px;height:19px"><div class="spin" style="width:16px"></div></div><div class="grp" style="left:527px;top:346px;width:90px;height:49px"></div><div class="radio" style="left:535px;top:359px"></div><div class="radio" style="left:535px;top:376px"></div><div class="t " style="left:553.40px;top:361.66px;font-size:11px;line-height:11px;color:#000;letter-spacing:0.133px;">Straumann</div><div class="t " style="left:553.40px;top:378.66px;font-size:11px;line-height:11px;color:#000;letter-spacing:-0.278px;">Advaa</div><div class="inp" style="left:627px;top:361px;width:94px;height:19px"><div class="spin" style="width:16px"></div></div><div class="inp" style="left:734px;top:361px;width:88px;height:19px"><div class="spin" style="width:16px"></div></div><div class="inp" style="left:836px;top:361px;width:58px;height:19px"><div class="spin" style="width:16px"></div></div><div class="inp" style="left:907px;top:361px;width:58px;height:19px"><div class="spin" style="width:16px"></div></div><div class="inp" style="left:977px;top:361px;width:168px;height:19px"></div><div class="inp" style="left:1157px;top:361px;width:158px;height:19px"></div><div class="t " style="left:386.70px;top:428.12px;font-size:12.5px;line-height:12.5px;color:#2d5a8b;font-weight:bold;letter-spacing:-0.281px;">Implant N°3</div><div class="inp" style="left:462px;top:424px;width:46px;height:19px"><div class="spin" style="width:16px"></div></div><div class="grp" style="left:527px;top:409px;width:90px;height:49px"></div><div class="radio" style="left:535px;top:422px"></div><div class="radio" style="left:535px;top:439px"></div><div class="t " style="left:553.40px;top:424.66px;font-size:11px;line-height:11px;color:#000;letter-spacing:0.133px;">Straumann</div><div class="t " style="left:553.40px;top:441.66px;font-size:11px;line-height:11px;color:#000;letter-spacing:-0.278px;">Advaa</div><div class="inp" style="left:627px;top:424px;width:94px;height:19px"><div class="spin" style="width:16px"></div></div><div class="inp" style="left:734px;top:424px;width:88px;height:19px"><div class="spin" style="width:16px"></div></div><div class="inp" style="left:836px;top:424px;width:58px;height:19px"><div class="spin" style="width:16px"></div></div><div class="inp" style="left:907px;top:424px;width:58px;height:19px"><div class="spin" style="width:16px"></div></div><div class="inp" style="left:977px;top:424px;width:168px;height:19px"></div><div class="inp" style="left:1157px;top:424px;width:158px;height:19px"></div><div class="t " style="left:386.70px;top:490.12px;font-size:12.5px;line-height:12.5px;color:#2d5a8b;font-weight:bold;letter-spacing:-0.281px;">Implant N°4</div><div class="inp" style="left:462px;top:486px;width:46px;height:19px"><div class="spin" style="width:16px"></div></div><div class="grp" style="left:527px;top:471px;width:90px;height:49px"></div><div class="radio" style="left:535px;top:484px"></div><div class="radio" style="left:535px;top:501px"></div><div class="t " style="left:553.40px;top:486.66px;font-size:11px;line-height:11px;color:#000;letter-spacing:0.133px;">Straumann</div><div class="t " style="left:553.40px;top:503.66px;font-size:11px;line-height:11px;color:#000;letter-spacing:-0.278px;">Advaa</div><div class="inp" style="left:627px;top:486px;width:94px;height:19px"><div class="spin" style="width:16px"></div></div><div class="inp" style="left:734px;top:486px;width:88px;height:19px"><div class="spin" style="width:16px"></div></div><div class="inp" style="left:836px;top:486px;width:58px;height:19px"><div class="spin" style="width:16px"></div></div><div class="inp" style="left:907px;top:486px;width:58px;height:19px"><div class="spin" style="width:16px"></div></div><div class="inp" style="left:977px;top:486px;width:168px;height:19px"></div><div class="inp" style="left:1157px;top:486px;width:158px;height:19px"></div><div class="t " style="left:386.70px;top:553.12px;font-size:12.5px;line-height:12.5px;color:#2d5a8b;font-weight:bold;letter-spacing:-0.281px;">Implant N°5</div><div class="inp" style="left:462px;top:549px;width:46px;height:19px"><div class="spin" style="width:16px"></div></div><div class="grp" style="left:527px;top:534px;width:90px;height:49px"></div><div class="radio" style="left:535px;top:547px"></div><div class="radio" style="left:535px;top:564px"></div><div class="t " style="left:553.40px;top:549.66px;font-size:11px;line-height:11px;color:#000;letter-spacing:0.133px;">Straumann</div><div class="t " style="left:553.40px;top:566.66px;font-size:11px;line-height:11px;color:#000;letter-spacing:-0.278px;">Advaa</div><div class="inp" style="left:627px;top:549px;width:94px;height:19px"><div class="spin" style="width:16px"></div></div><div class="inp" style="left:734px;top:549px;width:88px;height:19px"><div class="spin" style="width:16px"></div></div><div class="inp" style="left:836px;top:549px;width:58px;height:19px"><div class="spin" style="width:16px"></div></div><div class="inp" style="left:907px;top:549px;width:58px;height:19px"><div class="spin" style="width:16px"></div></div><div class="inp" style="left:977px;top:549px;width:168px;height:19px"></div><div class="inp" style="left:1157px;top:549px;width:158px;height:19px"></div><div class="t " style="left:386.70px;top:612.12px;font-size:12.5px;line-height:12.5px;color:#2d5a8b;font-weight:bold;letter-spacing:-0.281px;">Implant N°6</div><div class="inp" style="left:462px;top:608px;width:46px;height:19px"><div class="spin" style="width:16px"></div></div><div class="grp" style="left:527px;top:593px;width:90px;height:49px"></div><div class="radio" style="left:535px;top:606px"></div><div class="radio" style="left:535px;top:623px"></div><div class="t " style="left:553.40px;top:608.66px;font-size:11px;line-height:11px;color:#000;letter-spacing:0.133px;">Straumann</div><div class="t " style="left:553.40px;top:625.66px;font-size:11px;line-height:11px;color:#000;letter-spacing:-0.278px;">Advaa</div><div class="inp" style="left:627px;top:608px;width:94px;height:19px"><div class="spin" style="width:16px"></div></div><div class="inp" style="left:734px;top:608px;width:88px;height:19px"><div class="spin" style="width:16px"></div></div><div class="inp" style="left:836px;top:608px;width:58px;height:19px"><div class="spin" style="width:16px"></div></div><div class="inp" style="left:907px;top:608px;width:58px;height:19px"><div class="spin" style="width:16px"></div></div><div class="inp" style="left:977px;top:608px;width:168px;height:19px"></div><div class="inp" style="left:1157px;top:608px;width:158px;height:19px"></div><div class="t " style="left:386.70px;top:674.12px;font-size:12.5px;line-height:12.5px;color:#2d5a8b;font-weight:bold;letter-spacing:-0.281px;">Implant N°7</div><div class="inp" style="left:462px;top:670px;width:46px;height:19px"><div class="spin" style="width:16px"></div></div><div class="grp" style="left:527px;top:655px;width:90px;height:49px"></div><div class="radio" style="left:535px;top:668px"></div><div class="radio" style="left:535px;top:685px"></div><div class="t " style="left:553.40px;top:670.66px;font-size:11px;line-height:11px;color:#000;letter-spacing:0.133px;">Straumann</div><div class="t " style="left:553.40px;top:687.66px;font-size:11px;line-height:11px;color:#000;letter-spacing:-0.278px;">Advaa</div><div class="inp" style="left:627px;top:670px;width:94px;height:19px"><div class="spin" style="width:16px"></div></div><div class="inp" style="left:734px;top:670px;width:88px;height:19px"><div class="spin" style="width:16px"></div></div><div class="inp" style="left:836px;top:670px;width:58px;height:19px"><div class="spin" style="width:16px"></div></div><div class="inp" style="left:907px;top:670px;width:58px;height:19px"><div class="spin" style="width:16px"></div></div><div class="inp" style="left:977px;top:670px;width:168px;height:19px"></div><div class="inp" style="left:1157px;top:670px;width:158px;height:19px"></div><div class="t " style="left:386.70px;top:735.12px;font-size:12.5px;line-height:12.5px;color:#2d5a8b;font-weight:bold;letter-spacing:-0.281px;">Implant N°8</div><div class="inp" style="left:462px;top:731px;width:46px;height:19px"><div class="spin" style="width:16px"></div></div><div class="grp" style="left:527px;top:716px;width:90px;height:49px"></div><div class="radio" style="left:535px;top:729px"></div><div class="radio" style="left:535px;top:746px"></div><div class="t " style="left:553.40px;top:731.66px;font-size:11px;line-height:11px;color:#000;letter-spacing:0.133px;">Straumann</div><div class="t " style="left:553.40px;top:748.66px;font-size:11px;line-height:11px;color:#000;letter-spacing:-0.278px;">Advaa</div><div class="inp" style="left:627px;top:731px;width:94px;height:19px"><div class="spin" style="width:16px"></div></div><div class="inp" style="left:734px;top:731px;width:88px;height:19px"><div class="spin" style="width:16px"></div></div><div class="inp" style="left:836px;top:731px;width:58px;height:19px"><div class="spin" style="width:16px"></div></div><div class="inp" style="left:907px;top:731px;width:58px;height:19px"><div class="spin" style="width:16px"></div></div><div class="inp" style="left:977px;top:731px;width:168px;height:19px"></div><div class="inp" style="left:1157px;top:731px;width:158px;height:19px"></div><div class="t " style="left:411.00px;top:794.86px;font-size:11px;line-height:11px;color:#456b99;letter-spacing:0.114px;">Extractions :</div><div class="cb" style="left:476px;top:792px"></div><div class="t " style="left:494.00px;top:794.86px;font-size:11px;line-height:11px;color:#000;letter-spacing:-1.148px;">Yes</div><div class="cb on" style="left:526px;top:792px"></div><svg style="left:526px;top:792px" width="14" height="14" viewBox="0 0 14 14"><path d="M3.7 6.9 L5.3 10.1 L10.8 4.4" fill="none" stroke="#7a361e" stroke-width="2.1" stroke-linejoin="round"/></svg><div class="t " style="left:544.00px;top:794.86px;font-size:11px;line-height:11px;color:#000;letter-spacing:0.219px;">No</div><div class="inp" style="left:583px;top:790px;width:121px;height:19px"></div><div class="cb on" style="left:726px;top:792px"></div><svg style="left:726px;top:792px" width="14" height="14" viewBox="0 0 14 14"><path d="M3.7 6.9 L5.3 10.1 L10.8 4.4" fill="none" stroke="#7a361e" stroke-width="2.1" stroke-linejoin="round"/></svg><div class="t " style="left:744.50px;top:794.36px;font-size:11px;line-height:11px;color:#000;letter-spacing:0.040px;">Biomaterials</div><div class="inp" style="left:823px;top:791px;width:126px;height:19px"><div class="spin" style="width:16px"></div></div><div class="t " style="left:825.50px;top:794.86px;font-size:11px;line-height:11px;color:#000;letter-spacing:0.103px;">Osteobiol GTO</div><div class="t " style="left:972.50px;top:794.36px;font-size:11px;line-height:11px;color:#456b99;letter-spacing:0.317px;">Quantity</div><div class="inp" style="left:1029px;top:789px;width:70px;height:19px"><div class="spin" style="width:16px"></div></div><div class="t " style="left:1031.00px;top:792.86px;font-size:11px;line-height:11px;color:#000;letter-spacing:-0.209px;">0,25 cc</div><div class="inp" style="left:1112px;top:790px;width:168px;height:19px"></div><div class="t " style="left:1114.50px;top:793.86px;font-size:11px;line-height:11px;color:#000;letter-spacing:-0.173px;">567765444</div><div class="inp" style="left:1303px;top:790px;width:168px;height:19px"></div><div class="t " style="left:1305.50px;top:793.86px;font-size:11px;line-height:11px;color:#000;letter-spacing:-0.484px;">45F</div><div class="t " style="left:1171.00px;top:771.86px;font-size:11px;line-height:11px;color:#456b99;letter-spacing:0.028px;">Reference</div><div class="t " style="left:1379.00px;top:771.86px;font-size:11px;line-height:11px;color:#456b99;letter-spacing:-0.196px;">Parcel</div><div class="t " style="left:445.50px;top:828.16px;font-size:11px;line-height:11px;color:#456b99;letter-spacing:0.305px;">Bleeding during surgery</div><div class="inp" style="left:583px;top:824px;width:121px;height:19px"><div class="spin" style="width:16px"></div></div><div class="t " style="left:586.70px;top:827.86px;font-size:11px;line-height:11px;color:#000;">+</div><div class="t " style="left:803.70px;top:827.86px;font-size:11px;line-height:11px;color:#456b99;letter-spacing:-0.346px;">MEOPA :</div><div class="cb on" style="left:856px;top:826px"></div><svg style="left:856px;top:826px" width="14" height="14" viewBox="0 0 14 14"><path d="M3.7 6.9 L5.3 10.1 L10.8 4.4" fill="none" stroke="#7a361e" stroke-width="2.1" stroke-linejoin="round"/></svg><div class="t " style="left:874.00px;top:827.86px;font-size:11px;line-height:11px;color:#000;letter-spacing:-1.082px;">Yes</div><div class="cb" style="left:915px;top:826px"></div><div class="t " style="left:933.00px;top:827.86px;font-size:11px;line-height:11px;color:#000;letter-spacing:0.219px;">No</div><div class="t " style="left:988.00px;top:828.86px;font-size:11px;line-height:11px;color:#456b99;letter-spacing:0.300px;">Quantity of cartridges:</div><div class="inp" style="left:1119px;top:824px;width:44px;height:19px"></div><div class="t " style="left:1121.00px;top:827.36px;font-size:11px;line-height:11px;color:#000;">2</div><div style="left:378px;top:842px;width:1103px;height:43px;background:#c3d9e7"></div><div class="otab" style="left:385px;top:842px;width:77px;height:19px;border-radius:0 0 7px 4px"></div><div class="otab" style="left:462px;top:842px;width:78px;height:19px;border-radius:0 0 4px 7px"></div><div class="t " style="left:391.60px;top:848.26px;font-size:11px;line-height:11px;color:#000;letter-spacing:-0.080px;">Implantology</div><div class="t " style="left:469.70px;top:848.26px;font-size:11px;line-height:11px;color:#000;letter-spacing:-0.438px;">Support ENG</div><div style="left:0;top:884px;width:1481px;height:19px;background:linear-gradient(#c9dce8 0,#eaf2f6 1.5px,#e3edf3 5px,#d6e4ee 9px,#d3e2ec 16px,#dbe8f0 19px)"></div><div style="left:23px;top:885px;width:1px;height:17px;background:linear-gradient(rgba(120,160,198,0),#7aa1c6 45%,#7aa1c6 60%,rgba(120,160,198,0))"></div><div style="left:24px;top:886px;width:1px;height:16px;background:rgba(255,255,255,.55)"></div><div style="left:123px;top:885px;width:1px;height:17px;background:linear-gradient(rgba(120,160,198,0),#7aa1c6 45%,#7aa1c6 60%,rgba(120,160,198,0))"></div><div style="left:124px;top:886px;width:1px;height:16px;background:rgba(255,255,255,.55)"></div><div style="left:223px;top:885px;width:1px;height:17px;background:linear-gradient(rgba(120,160,198,0),#7aa1c6 45%,#7aa1c6 60%,rgba(120,160,198,0))"></div><div style="left:224px;top:886px;width:1px;height:16px;background:rgba(255,255,255,.55)"></div><div style="left:473px;top:885px;width:1px;height:17px;background:linear-gradient(rgba(120,160,198,0),#7aa1c6 45%,#7aa1c6 60%,rgba(120,160,198,0))"></div><div style="left:474px;top:886px;width:1px;height:16px;background:rgba(255,255,255,.55)"></div><div class="t " style="left:228.00px;top:889.86px;font-size:11px;line-height:11px;color:#000;letter-spacing:0.240px;">ORTHO Marilyne</div><div style="left:0;top:903px;width:1481px;height:5px;background:#1a3a6b"></div></body></html>
